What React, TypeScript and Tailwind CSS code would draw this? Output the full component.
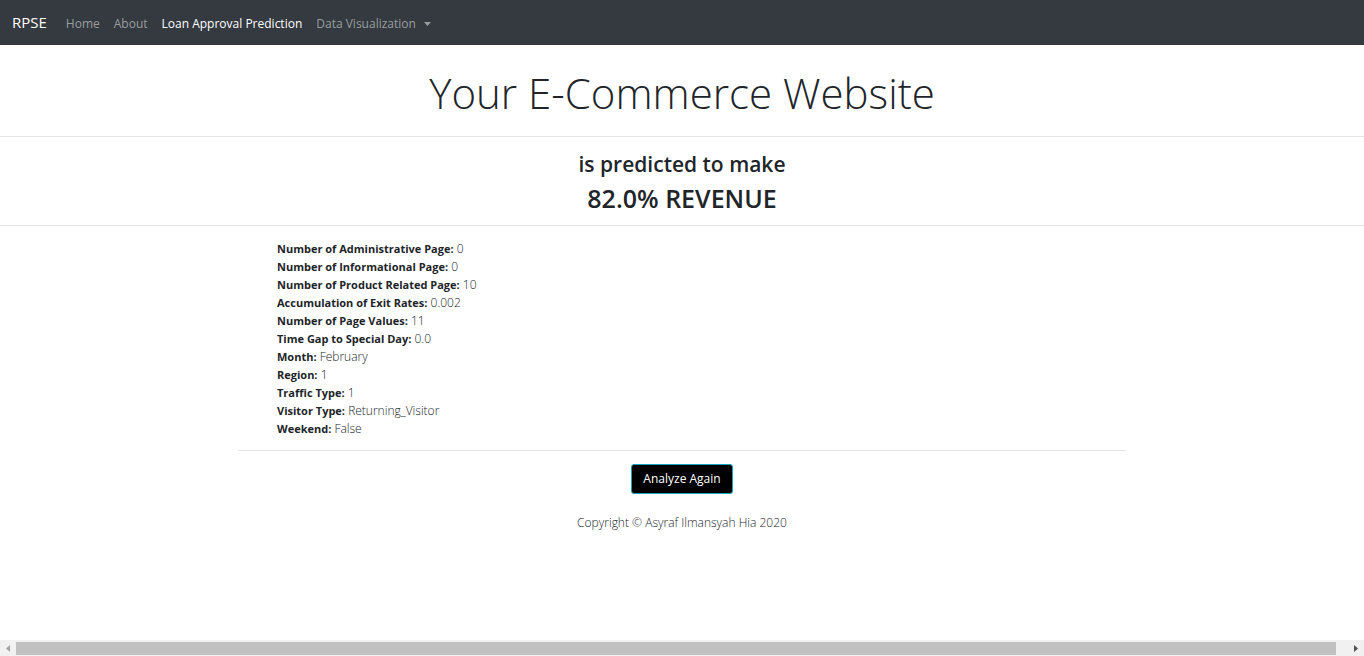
const navItems = [
  { label: "Home", active: false },
  { label: "About", active: false },
  { label: "Loan Approval Prediction", active: true },
];

const details = [
  ["Number of Administrative Page:", "0"],
  ["Number of Informational Page:", "0"],
  ["Number of Product Related Page:", "10"],
  ["Accumulation of Exit Rates:", "0.002"],
  ["Number of Page Values:", "11"],
  ["Time Gap to Special Day:", "0.0"],
  ["Month:", "February"],
  ["Region:", "1"],
  ["Traffic Type:", "1"],
  ["Visitor Type:", "Returning_Visitor"],
  ["Weekend:", "False"],
];

function Navbar() {
  return (
    <nav className="flex h-[45px] items-center bg-[#343a40] px-3 text-white">
      <a href="#" className="mr-[19px] pb-[2px] text-[15px] leading-6">
        RPSE
      </a>
      <ul className="flex items-center gap-[14px] pt-[2px] text-[12px] leading-5">
        {navItems.map((item) => (
          <li key={item.label}>
            <a href="#" className={item.active ? "text-white" : "text-[#999c9f]"}>
              {item.label}
            </a>
          </li>
        ))}
        <li>
          <button type="button" aria-haspopup="true" className="flex items-center text-[#999c9f]">
            Data Visualization
            <svg className="ml-2 h-[4px] w-[7px]" viewBox="0 0 7 4" fill="currentColor" aria-hidden="true">
              <path d="M0 0H7L3.5 4Z" />
            </svg>
          </button>
        </li>
      </ul>
    </nav>
  );
}

function HorizontalScrollbar() {
  return (
    <div className="mt-auto flex h-4 w-full items-center bg-[#f1f1f1]">
      <button type="button" aria-label="Scroll left" className="flex h-4 w-4 items-center justify-center text-[#a3a3a3]">
        <svg className="h-[7px] w-1" viewBox="0 0 4 7" fill="currentColor" aria-hidden="true">
          <path d="M4 0V7L0 3.5Z" />
        </svg>
      </button>
      <div className="mr-3 h-[13px] flex-1 bg-[#c1c1c1]" />
      <button type="button" aria-label="Scroll right" className="flex h-4 w-4 items-center justify-center text-[#505050]">
        <svg className="h-[7px] w-1" viewBox="0 0 4 7" fill="currentColor" aria-hidden="true">
          <path d="M0 0V7L4 3.5Z" />
        </svg>
      </button>
    </div>
  );
}

export default function App() {
  return (
    <div className="flex min-h-screen flex-col bg-white font-['Open_Sans','Noto_Sans',sans-serif] text-[#212529]">
      <Navbar />
      <main>
        <h1 className="pt-5 pb-4 text-center text-[42px] leading-[55px] font-light">
          Your E-Commerce Website
        </h1>
        <hr className="border-[#e5e5e5]" />
        <section className="pt-[11px] pb-[11px] text-center font-semibold">
          <h2 className="text-[21px] leading-8">is predicted to make</h2>
          <h3 className="pt-[2px] text-[25px] leading-8">82.0% REVENUE</h3>
        </section>
        <hr className="border-[#e5e5e5]" />
        <div className="mx-auto max-w-[912px] px-3">
          <ul className="px-[39px] pt-[14px] pb-3 text-[12px] leading-[18px]">
            {details.map(([label, value]) => (
              <li key={label}>
                <strong className="text-[11px] font-bold">{label}</strong> <span className="font-light">{value}</span>
              </li>
            ))}
          </ul>
          <hr className="border-[#e5e5e5]" />
          <div className="pt-[13px] text-center">
            <button
              type="button"
              className="h-[30px] rounded-[3px] border border-[#17a2b8] bg-black px-[11px] text-[12px] leading-5 text-white"
            >
              Analyze Again
            </button>
          </div>
        </div>
      </main>
      <footer className="pt-5 text-center text-[12px] leading-[18px] font-light">
        Copyright © Asyraf Ilmansyah Hia 2020
      </footer>
      <HorizontalScrollbar />
    </div>
  );
}
